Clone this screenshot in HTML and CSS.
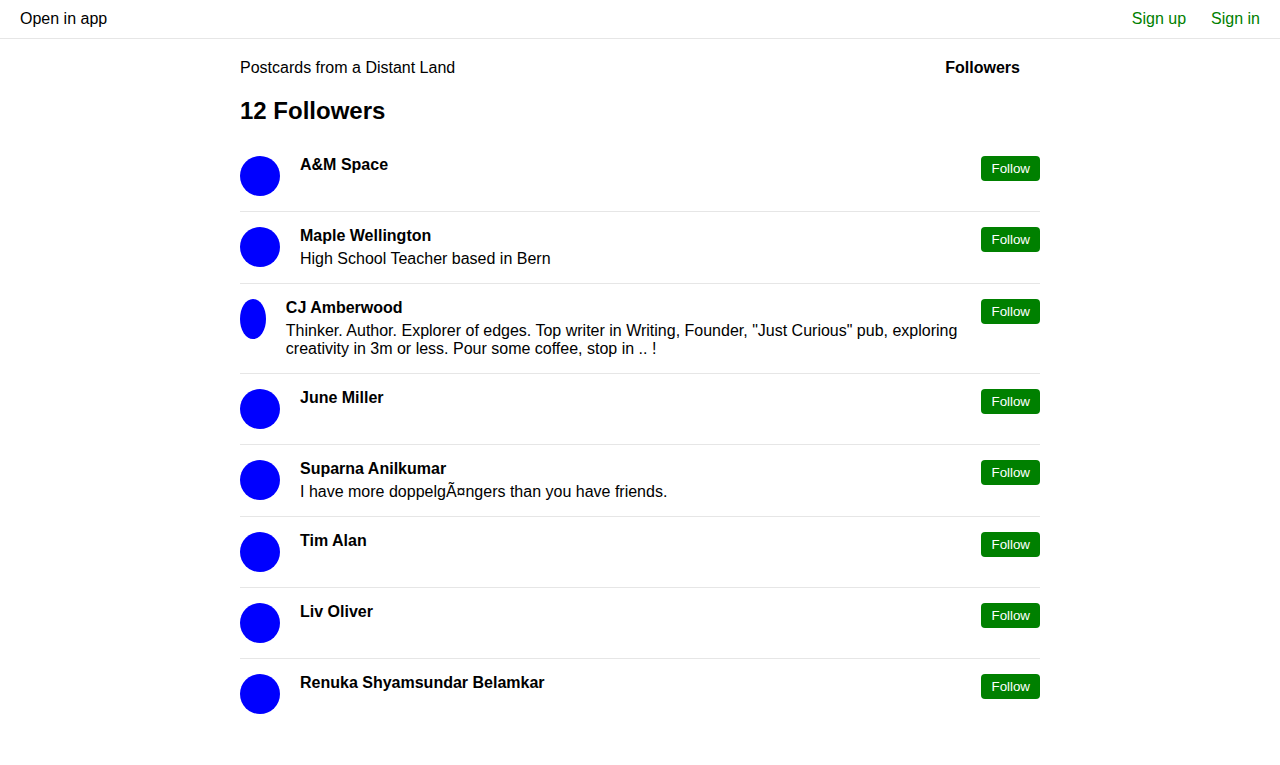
FILE: index.html
```html
<!DOCTYPE html>
<html>
<head>
<meta charset="utf-8">
<link rel="stylesheet" href="styles.css">
</head>
<body>
<header class="topbar">
  <a class="open-app" href="#">Open in app</a>
  <nav class="auth">
    <a href="#">Sign up</a>
    <a href="#">Sign in</a>
  </nav>
</header>
<main class="page">
  <div class="pubnav">
    <a class="pubname" href="#">Postcards from a Distant Land</a>
    <a class="pubtab" href="#">Followers</a>
  </div>
  <h1 class="title">12 Followers</h1>
  <ul class="list">
    <li class="row"><div class="avatar"></div><div class="info"><div class="name">A&amp;M Space</div></div><button class="follow">Follow</button></li>
    <li class="row"><div class="avatar"></div><div class="info"><div class="name">Maple Wellington</div><div class="bio">High School Teacher based in Bern</div></div><button class="follow">Follow</button></li>
    <li class="row"><div class="avatar"></div><div class="info"><div class="name">CJ Amberwood</div><div class="bio">Thinker. Author. Explorer of edges. Top writer in Writing, Founder, "Just Curious" pub, exploring creativity in 3m or less. Pour some coffee, stop in .. !</div></div><button class="follow">Follow</button></li>
    <li class="row"><div class="avatar"></div><div class="info"><div class="name">June Miller</div></div><button class="follow">Follow</button></li>
    <li class="row"><div class="avatar"></div><div class="info"><div class="name">Suparna Anilkumar</div><div class="bio">I have more doppelgÃ¤ngers than you have friends.</div></div><button class="follow">Follow</button></li>
    <li class="row"><div class="avatar"></div><div class="info"><div class="name">Tim Alan</div></div><button class="follow">Follow</button></li>
    <li class="row"><div class="avatar"></div><div class="info"><div class="name">Liv Oliver</div></div><button class="follow">Follow</button></li>
    <li class="row"><div class="avatar"></div><div class="info"><div class="name">Renuka Shyamsundar Belamkar</div></div><button class="follow">Follow</button></li>
  </ul>
</main>
</body>
</html>
```
FILE: styles.css
```css
html, body {
  margin: 0;
  padding: 0;
  background: #fff;
  color: #000;
  font-family: "Liberation Sans", Arial, sans-serif;
  font-size: 16px;
  line-height: 1.15;
}
a {
  color: inherit;
  text-decoration: none;
}
.topbar {
  display: flex;
  justify-content: space-between;
  align-items: center;
  padding: 10px 20px;
  border-bottom: 1px solid #e6e6e6;
}
.auth {
  display: flex;
  gap: 25px;
}
.auth a {
  color: #008000;
}
.page {
  width: 800px;
  margin: 0 auto;
}
.pubnav {
  display: flex;
  justify-content: space-between;
  margin-top: 20px;
}
.pubtab {
  font-weight: bold;
  margin-right: 20px;
}
.title {
  font-size: 24px;
  font-weight: bold;
  margin: 19px 0 17px;
}
.list {
  list-style: none;
  margin: 0;
  padding: 0;
}
.row {
  display: flex;
  align-items: flex-start;
  gap: 20px;
  padding: 15px 0;
  border-bottom: 1px solid #e6e6e6;
}
.row:last-child {
  border-bottom: none;
}
.avatar {
  width: 40px;
  height: 40px;
  border-radius: 50%;
  background: #0000ff;
}
.info {
  flex: 0 1 auto;
}
.name {
  font-weight: bold;
}
.bio {
  margin-top: 4px;
}
.follow {
  margin-left: auto;
  flex: none;
  background: #008000;
  color: #fff;
  border: none;
  border-radius: 4px;
  font-family: "Liberation Sans", Arial, sans-serif;
  font-size: 13.33px;
  padding: 5px 10px;
  height: 25px;
  line-height: 15px;
  cursor: pointer;
}
```
